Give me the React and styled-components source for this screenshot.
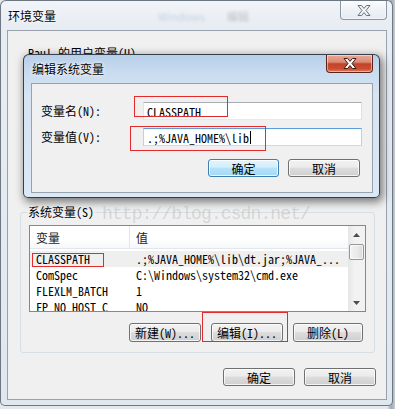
import styled, { createGlobalStyle } from 'styled-components'

const GlobalStyle = createGlobalStyle`
  html, body { margin: 0; padding: 0; background: #dfe4ea; }
  body {
    font-family: "Noto Sans Mono CJK SC", "Liberation Mono", "Noto Sans CJK SC", monospace;
    font-size: 12px;
    color: #000;
  }
`;

const Desktop = styled.div`
  position: relative;
  width: 395px;
  height: 409px;
  overflow: hidden;
  background: linear-gradient(90deg, #e4e8ee 0%, #e4e8ee 98%, #9ea7b1 99%, #c4cbd3 100%);
`;

const Frame = styled.div`
  position: absolute;
  box-sizing: border-box;
  display: flex;
  flex-direction: column;
  border: 1px solid ${(p) => (p.$active ? 'rgba(25,35,48,.85)' : 'rgba(70,80,92,.75)')};
  border-radius: 6px 6px 5px 5px;
  background: ${(p) =>
    p.$active
      ? 'linear-gradient(180deg, #b7cfe8 0px, #cadcf0 18px, #d6e4f3 40px, #dbe8f5 100%)'
      : 'linear-gradient(180deg, #f1f4f8 0px, #e8edf3 24px, #e0e7ef 100%)'};
`;

const MainWindow = styled(Frame)`
  left: 0;
  top: 0;
  width: 393px;
  height: 406px;
  padding: 0 5px 5px 6px;
`;

const EditDialog = styled(Frame)`
  left: 23px;
  top: 54px;
  width: 357px;
  height: 144px;
  padding: 0 6px 4px 7px;
  box-shadow: 2px 3px 9px 1px rgba(0, 0, 0, 0.5);
`;

const TitleBar = styled.div`
  display: flex;
  align-items: flex-start;
  height: ${(p) => p.$h}px;
  flex-shrink: 0;
`;

const Caption = styled.span`
  align-self: center;
  margin-left: 1px;
  font-family: "Noto Sans CJK SC", sans-serif;
  font-size: 12px;
  line-height: 14px;
  color: #000;
  text-shadow: 0 0 5px #fff, 0 0 2px #fff;
`;

const GlassGhost = styled.span`
  align-self: center;
  margin-left: ${(p) => p.$gap}px;
  font-family: "Noto Sans CJK SC", sans-serif;
  font-size: 11px;
  color: ${(p) => p.$c};
  opacity: 0.3;
  filter: blur(1.4px);
`;

const CloseButton = styled.div`
  margin-left: auto;
  box-sizing: border-box;
  width: 47px;
  height: ${(p) => p.$h}px;
  display: flex;
  align-items: center;
  justify-content: center;
  border: 1px solid ${(p) => (p.$active ? '#5e2317' : '#8b96a3')};
  border-top: none;
  border-radius: 0 0 4px 4px;
  background: ${(p) =>
    p.$active
      ? 'linear-gradient(180deg, #e9a997 0%, #dc8a74 42%, #c4432a 52%, #c94d33 80%, #e07a5e 100%)'
      : 'linear-gradient(180deg, #fbfcfd 0%, #eef2f6 50%, #e6ecf2 100%)'};
  box-shadow: inset 0 0 0 1px rgba(255, 255, 255, 0.45);
`;

const Client = styled.div`
  flex: 1;
  display: flex;
  flex-direction: column;
  background: #f0f0f0;
  border: 1px solid #98a2ad;
  min-height: 0;
`;

const UserLabel = styled.div`
  margin: 15px 0 0 20px;
  line-height: 14px;
`;

const UserSlot = styled.div`
  height: 145px;
  flex-shrink: 0;
`;

const Group = styled.fieldset`
  margin: 0 11px 0 12px;
  padding: 6px 8px 10px 8px;
  min-width: 0;
  border: 1px solid #d5dfe5;
  border-radius: 3px;
`;

const Legend = styled.legend`
  margin-left: -2px;
  padding: 0 1px;
  line-height: 14px;
`;

const ListView = styled.div`
  height: 87px;
  box-sizing: border-box;
  border: 1px solid #828790;
  background: #fff;
  display: flex;
`;

const ListMain = styled.div`
  flex: 1;
  display: flex;
  flex-direction: column;
  overflow: hidden;
`;

const HeaderRow = styled.div`
  display: grid;
  grid-template-columns: 100px 1fr;
  height: 23px;
  flex-shrink: 0;
  box-sizing: border-box;
  border-bottom: 1px solid #e3e6ea;
  background: linear-gradient(180deg, #ffffff 0%, #ffffff 60%, #f6f7f9 100%);
`;

const HeaderCell = styled.div`
  display: flex;
  align-items: center;
  padding-left: 6px;
  color: #1b1b1b;
  border-right: ${(p) => (p.$sep ? '1px solid #e5e5e5' : 'none')};
`;

const Rows = styled.div`
  padding-top: 2px;
  overflow: hidden;
`;

const Row = styled.div`
  display: grid;
  grid-template-columns: 100px 1fr;
  height: 16px;
  line-height: 16px;
  background: ${(p) => (p.$selected ? '#efefef' : 'transparent')};
  white-space: nowrap;
`;

const Cell = styled.div`
  padding-left: 6px;
  overflow: hidden;
`;

const ScrollBar = styled.div`
  width: 17px;
  display: flex;
  flex-direction: column;
  background: linear-gradient(90deg, #e6e6e6 0%, #f2f2f2 40%, #f2f2f2 100%);
`;

const ScrollArrow = styled.div`
  height: 17px;
  display: flex;
  align-items: center;
  justify-content: center;
  flex-shrink: 0;
`;

const ScrollThumb = styled.div`
  height: 16px;
  margin: 1px 1px 0 1px;
  box-sizing: border-box;
  border: 1px solid #979797;
  border-radius: 2px;
  background: linear-gradient(90deg, #f3f3f3 0%, #e9e9e9 60%, #d9d9d9 100%);
  box-shadow: inset 0 0 0 1px rgba(255, 255, 255, 0.7);
`;

const ScrollTrack = styled.div`
  flex: 1;
`;

const ButtonRow = styled.div`
  display: flex;
  justify-content: flex-end;
  gap: ${(p) => p.$gap}px;
  margin: ${(p) => p.$m};
`;

const Button = styled.div`
  box-sizing: border-box;
  width: ${(p) => p.$w}px;
  height: ${(p) => p.$h}px;
  display: flex;
  align-items: center;
  justify-content: center;
  border: 1px solid ${(p) => (p.$focus ? '#3c7fb1' : '#707070')};
  border-radius: 3px;
  background: ${(p) =>
    p.$focus
      ? 'linear-gradient(180deg, #e5f4fc 0%, #d3eefc 45%, #b6e2fb 50%, #a4d8f6 100%)'
      : 'linear-gradient(180deg, #f2f2f2 0%, #ebebeb 45%, #dddddd 50%, #cfcfcf 100%)'};
  box-shadow: inset 0 0 0 1px rgba(255, 255, 255, 0.75);
  white-space: nowrap;
`;

const FormGrid = styled.div`
  display: grid;
  grid-template-columns: 102px 1fr;
  row-gap: 8px;
  align-items: center;
  padding: 18px 10px 0 9px;
`;

const FieldLabel = styled.div`
  line-height: 14px;
`;

const TextBox = styled.div`
  height: 18px;
  box-sizing: border-box;
  display: flex;
  align-items: center;
  padding-left: 3px;
  background: #fff;
  border: 1px solid;
  border-color: ${(p) =>
    p.$focus ? '#5c9fd8 #b7d3ec #c5dcf0 #b7d3ec' : '#abadb3 #dbdfe6 #e3e9ef #e2e3ea'};
  white-space: nowrap;
`;

const Caret = styled.span`
  display: inline-block;
  width: 1px;
  height: 13px;
  margin-left: 1px;
  background: #000;
`;

const Mark = styled.div`
  position: absolute;
  left: ${(p) => p.$x}px;
  top: ${(p) => p.$y}px;
  width: ${(p) => p.$w}px;
  height: ${(p) => p.$h}px;
  box-sizing: border-box;
  border: 1px solid #e42a2a;
  pointer-events: none;
`;

const Watermark = styled.div`
  position: absolute;
  left: 102px;
  top: 203px;
  font-family: "Liberation Mono", monospace;
  font-size: 18px;
  letter-spacing: -0.9px;
  line-height: 22px;
  color: rgba(170, 170, 170, 0.38);
  pointer-events: none;
`;

const CloseGlyph = ({ active }) => (
  <svg width="14" height="11" viewBox="0 0 14 11">
    <polygon
      points="1,0.5 4.6,0.5 7,3.4 9.4,0.5 13,0.5 9,5.5 13,10.5 9.4,10.5 7,7.6 4.6,10.5 1,10.5 5,5.5"
      fill={active ? '#ffffff' : '#f1f3f6'}
      stroke={active ? '#3b1c16' : '#6a7380'}
      strokeWidth="1"
      strokeLinejoin="round"
    />
  </svg>
);

const ArrowGlyph = ({ down }) => (
  <svg width="7" height="4" viewBox="0 0 7 4">
    <polygon points={down ? '0,0 7,0 3.5,4' : '3.5,0 7,4 0,4'} fill="#4d4d4d" />
  </svg>
);

const variables = [
  { name: 'CLASSPATH', value: '.;%JAVA_HOME%\\lib\\dt.jar;%JAVA_...', selected: true },
  { name: 'ComSpec', value: 'C:\\Windows\\system32\\cmd.exe' },
  { name: 'FLEXLM_BATCH', value: '1' },
  { name: 'FP_NO_HOST_C', value: 'NO' },
];

const App = () => {
  return (
    <Desktop>
      <GlobalStyle />
      <MainWindow>
        <TitleBar $h={29}>
          <Caption>环境变量</Caption>
          <GlassGhost $gap={102} $c="#6f88ad">Windows</GlassGhost>
          <GlassGhost $gap={22} $c="#555">编辑</GlassGhost>
          <CloseButton $h={19}>
            <CloseGlyph />
          </CloseButton>
        </TitleBar>
        <Client>
          <UserLabel>Paul 的用户变量(U)</UserLabel>
          <UserSlot />
          <Group>
            <Legend>系统变量(S)</Legend>
            <ListView>
              <ListMain>
                <HeaderRow>
                  <HeaderCell $sep>变量</HeaderCell>
                  <HeaderCell>值</HeaderCell>
                </HeaderRow>
                <Rows>
                  {variables.map((v) => (
                    <Row key={v.name} $selected={v.selected}>
                      <Cell>{v.name}</Cell>
                      <Cell>{v.value}</Cell>
                    </Row>
                  ))}
                </Rows>
              </ListMain>
              <ScrollBar>
                <ScrollArrow>
                  <ArrowGlyph />
                </ScrollArrow>
                <ScrollThumb />
                <ScrollTrack />
                <ScrollArrow>
                  <ArrowGlyph down />
                </ScrollArrow>
              </ScrollBar>
            </ListView>
            <ButtonRow $gap={10} $m="11px 3px 0 0">
              <Button $w={72} $h={19}>新建(W)...</Button>
              <Button $w={72} $h={19}>编辑(I)...</Button>
              <Button $w={70} $h={19}>删除(L)</Button>
            </ButtonRow>
          </Group>
          <ButtonRow $gap={9} $m="15px 10px 0 0">
            <Button $w={72} $h={18}>确定</Button>
            <Button $w={72} $h={18}>取消</Button>
          </ButtonRow>
        </Client>
      </MainWindow>

      <EditDialog $active>
        <TitleBar $h={28}>
          <Caption>编辑系统变量</Caption>
          <CloseButton $active $h={18}>
            <CloseGlyph active />
          </CloseButton>
        </TitleBar>
        <Client>
          <FormGrid>
            <FieldLabel>变量名(N):</FieldLabel>
            <TextBox>CLASSPATH</TextBox>
            <FieldLabel>变量值(V):</FieldLabel>
            <TextBox $focus>
              .;%JAVA_HOME%\lib
              <Caret />
            </TextBox>
          </FormGrid>
          <ButtonRow $gap={9} $m="13px 12px 0 0">
            <Button $w={71} $h={18} $focus>确定</Button>
            <Button $w={72} $h={18}>取消</Button>
          </ButtonRow>
        </Client>
      </EditDialog>

      <Watermark>http://blog.csdn.net/</Watermark>
      <Mark $x={134} $y={96} $w={94} $h={21} />
      <Mark $x={130} $y={126} $w={136} $h={25} />
      <Mark $x={32} $y={253} $w={72} $h={14} />
      <Mark $x={202} $y={312} $w={86} $h={30} />
    </Desktop>
  );
};

export default App;
